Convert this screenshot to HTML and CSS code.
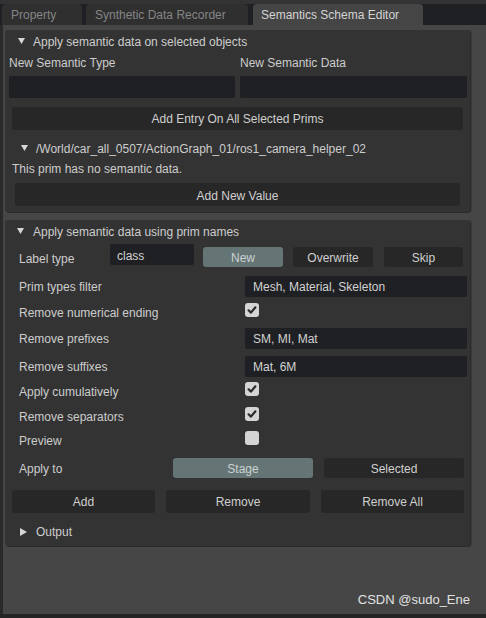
FILE: index.html
```html
<!DOCTYPE html>
<html>
<head>
<meta charset="utf-8">
<link rel="stylesheet" href="styles.css">
</head>
<body>
<div class="window">
  <div class="topstrip"></div>
  <div class="tabs">
    <div class="tab tab-property">Property</div>
    <div class="tab tab-sdr">Synthetic Data Recorder</div>
    <div class="tab tab-active">Semantics Schema Editor</div>
  </div>
  <div class="content">
    <div class="panel panel1">
      <div class="header"><svg class="tri" viewBox="0 0 7 6"><path d="M0 0H7L3.5 6Z"/></svg><span>Apply semantic data on selected objects</span></div>
      <div class="two-col labels">
        <div>New Semantic Type</div>
        <div>New Semantic Data</div>
      </div>
      <div class="two-col inputs">
        <div class="input"></div>
        <div class="input"></div>
      </div>
      <div class="btn btn-wide">Add Entry On All Selected Prims</div>
      <div class="subheader"><svg class="tri" viewBox="0 0 7 6"><path d="M0 0H7L3.5 6Z"/></svg><span>/World/car_all_0507/ActionGraph_01/ros1_camera_helper_02</span></div>
      <div class="note">This prim has no semantic data.</div>
      <div class="btn btn-value">Add New Value</div>
    </div>

    <div class="panel panel2">
      <div class="header"><svg class="tri" viewBox="0 0 7 6"><path d="M0 0H7L3.5 6Z"/></svg><span>Apply semantic data using prim names</span></div>

      <div class="row row-labeltype">
        <div class="label lt-label">Label type</div>
        <div class="input input-class">class</div>
        <div class="btn seg seg-active seg-new">New</div>
        <div class="btn seg seg-over">Overwrite</div>
        <div class="btn seg seg-skip">Skip</div>
      </div>

      <div class="row h32">
        <div class="label">Prim types filter</div>
        <div class="input field">Mesh, Material, Skeleton</div>
      </div>
      <div class="row h20">
        <div class="label">Remove numerical ending</div>
        <div class="check on"><svg viewBox="0 0 14 14"><path d="M3.6 7.3L6 9.6L10.4 4.3"/></svg></div>
      </div>
      <div class="row h32">
        <div class="label">Remove prefixes</div>
        <div class="input field">SM, MI, Mat</div>
      </div>
      <div class="row h24">
        <div class="label">Remove suffixes</div>
        <div class="input field">Mat, 6M</div>
      </div>
      <div class="row h26">
        <div class="label">Apply cumulatively</div>
        <div class="check on"><svg viewBox="0 0 14 14"><path d="M3.6 7.3L6 9.6L10.4 4.3"/></svg></div>
      </div>
      <div class="row h24">
        <div class="label">Remove separators</div>
        <div class="check on"><svg viewBox="0 0 14 14"><path d="M3.6 7.3L6 9.6L10.4 4.3"/></svg></div>
      </div>
      <div class="row h24">
        <div class="label">Preview</div>
        <div class="check"></div>
      </div>
      <div class="row h32">
        <div class="label applyto-label">Apply to</div>
        <div class="btn seg2 seg-active">Stage</div>
        <div class="btn seg2">Selected</div>
      </div>

      <div class="actions">
        <div class="btn act">Add</div>
        <div class="btn act">Remove</div>
        <div class="btn act">Remove All</div>
      </div>

      <div class="header output"><svg class="tri-r" viewBox="0 0 7 8"><path d="M0 0V8L7 4Z"/></svg><span>Output</span></div>
    </div>
  </div>
  <div class="bottomline"></div>
  <div class="watermark">CSDN @sudo_Ene</div>
</div>
</body>
</html>
```

FILE: styles.css
```css
* { box-sizing: border-box; }
html, body { margin: 0; padding: 0; }
body {
  width: 486px;
  height: 618px;
  overflow: hidden;
  background: #2a2a2a;
  font-family: "Liberation Sans", Arial, sans-serif;
  font-size: 12px;
  color: #cdcdcd;
}
.window {
  position: relative;
  width: 486px;
  height: 618px;
  display: flex;
  flex-direction: column;
}
.topstrip {
  height: 4px;
  background: #333335;
  flex: none;
}
.tabs {
  height: 21px;
  flex: none;
  display: flex;
  align-items: flex-end;
  background: #1f2023;
  padding-left: 2px;
}
.tab {
  height: 21px;
  line-height: 23px;
  border-radius: 4px 4px 0 0;
  background: #2f2f2f;
  color: #858585;
  padding-left: 9px;
}
.tab-property { width: 80px; }
.tab-sdr { width: 162px; margin-left: 4px; }
.tab-active {
  width: 170px;
  margin-left: 5px;
  background: #454545;
  color: #d4d4d4;
  padding-left: 8px;
}
.content {
  flex: 1;
  background: #464646;
  border-left: 3px solid #2a2a2a;
  padding: 5px 16px 0 2px;
  display: flex;
  flex-direction: column;
  gap: 8px;
}
.bottomline {
  height: 4px;
  flex: none;
  background: #252525;
}
.panel {
  background: #333333;
  border-radius: 3px;
  box-shadow: 1px 1px 0 #2b2b2b, 2px 0 0 #3a3a3a;
  display: flex;
  flex-direction: column;
}
.panel1 { padding: 0 3px 6px 4px; }
.panel2 { padding: 0 3px 5px 0; }

.header, .subheader {
  display: flex;
  align-items: center;
  height: 22px;
  padding-top: 1px;
}
.panel1 .header { padding-left: 9px; }
.panel2 .header { padding-left: 12px; }
.tri { width: 7px; height: 6px; fill: #d6d6d6; margin-right: 8px; flex: none; margin-top: -2px; }
.panel2 .header .tri { margin-right: 9px; }
.tri-r { width: 7px; height: 8px; fill: #d6d6d6; margin-right: 9px; flex: none; }

.two-col {
  display: grid;
  grid-template-columns: 226px 227px;
  column-gap: 5px;
}
.labels { height: 20px; line-height: 20px; padding-top: 1px; }
.inputs { margin-top: 4px; }
.input {
  height: 22px;
  background: #1f2023;
  border-radius: 2px;
}
.btn {
  background: #272727;
  border-radius: 3px;
  color: #cfcfcf;
  text-align: center;
  display: flex;
  align-items: center;
  justify-content: center;
  padding-top: 1px;
}
.btn-wide { margin: 9px 4px 0 3px; height: 23px; }
.subheader { margin-top: 8px; height: 20px; padding-left: 12px; }
.subheader .tri { margin-right: 8px; }
.note { height: 21px; line-height: 21px; padding-left: 3px; padding-top: 1px; }
.btn-value { margin: 4px 7px 0 6px; height: 23px; padding-top: 2px; }

.row {
  display: flex;
  align-items: center;
  padding-left: 14px;
}
.row .label { padding-top: 2px; }
.h20 { height: 20px; }
.h24 { height: 24px; }
.h26 { height: 26px; }
.h32 { height: 32px; }
.label { width: 226px; flex: none; }
.field {
  width: 222px;
  height: 21px;
  line-height: 21px;
  padding-left: 8px;
  padding-top: 1px;
  color: #d2d2d2;
}
.check {
  width: 14px;
  height: 14px;
  border-radius: 3px;
  background: #d4d4d4;
  margin-bottom: 4px;
  flex: none;
}
.check svg { width: 14px; height: 14px; display: block; }
.check svg path { fill: none; stroke: #2a2a2a; stroke-width: 2.2; stroke-linecap: round; stroke-linejoin: round; }

.row-labeltype { height: 26px; align-items: flex-start; margin-top: 2px; }
.row-labeltype .lt-label { width: 91px; padding-top: 8px; }
.input-class {
  width: 84px;
  height: 21px;
  line-height: 20px;
  padding-left: 7px;
  padding-top: 2px;
  color: #d2d2d2;
}
.seg { height: 20px; margin-top: 3px; }
.seg-new { width: 80px; margin-left: 9px; }
.seg-over { width: 80px; margin-left: 10px; }
.seg-skip { width: 79px; margin-left: 11px; }
.seg-active { background: #657474; color: #c9d2d2; }

.row .applyto-label { width: 154px; }
.seg2 { width: 140px; height: 20px; }
.seg2 + .seg2 { margin-left: 11px; }

.actions {
  display: flex;
  gap: 11px;
  margin-top: 6px;
  padding-left: 7px;
}
.act { height: 23px; width: 143px; }
.act:nth-child(2) { width: 144px; }

.header.output { margin-top: 8px; height: 20px; padding-left: 15px; }

.watermark {
  position: absolute;
  right: 16px;
  top: 592px;
  font-family: "Liberation Sans", Arial, sans-serif;
  font-size: 13px;
  color: #e2e2e2;
}
```
